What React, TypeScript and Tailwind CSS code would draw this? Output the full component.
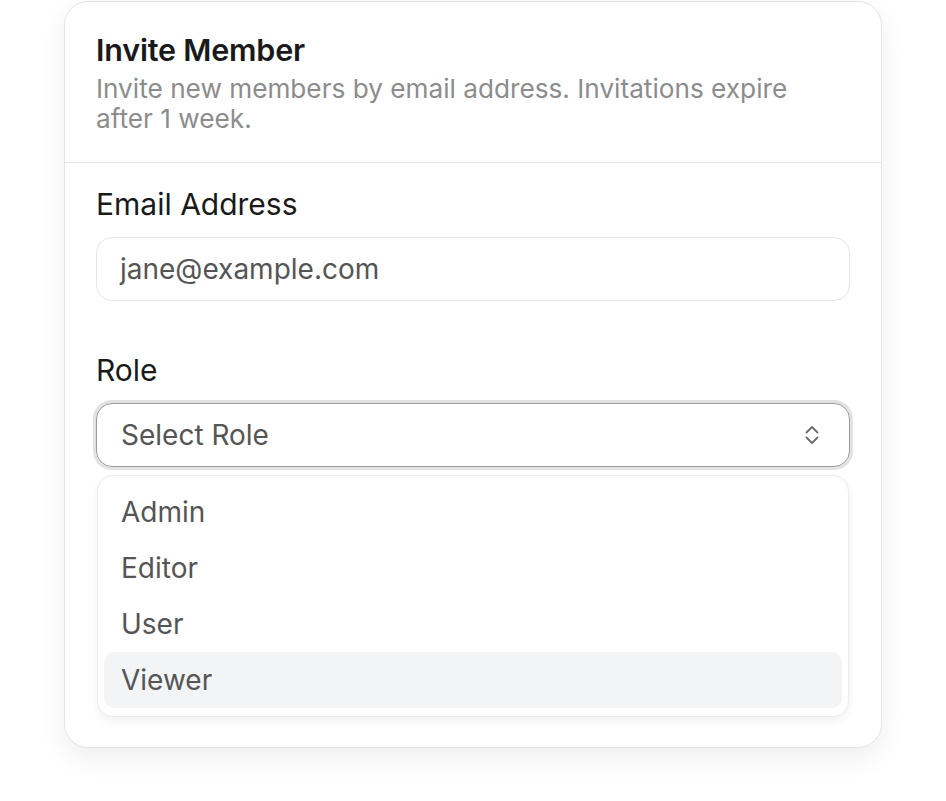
const roles = ['Admin', 'Editor', 'User', 'Viewer'];

function UpDownIcon() {
  return (
    <svg width="16" height="24" viewBox="0 0 16 24" fill="none" className="text-[#6b6b6b]">
      <path d="M2.5 9.5 8 4l5.5 5.5" stroke="currentColor" strokeWidth="1.8" strokeLinecap="round" strokeLinejoin="round" />
      <path d="M2.5 14.5 8 20l5.5-5.5" stroke="currentColor" strokeWidth="1.8" strokeLinecap="round" strokeLinejoin="round" />
    </svg>
  );
}

export default function App() {
  const active = 'Viewer';

  return (
    <div className="min-h-[801px] bg-white pl-[64px] pt-px font-['Inter',sans-serif]">
      <div className="w-[818px] rounded-[24px] border border-[#e4e4e4] bg-white shadow-[0_10px_28px_rgba(0,0,0,0.07)]">
        {/* Header */}
        <div className="border-b border-[#e6e6e6] px-[31px] pb-[28px] pt-[30px]">
          <h2 className="text-[30.5px] font-semibold leading-[36px] tracking-[-0.2px] text-[#1a1a1a]">
            Invite Member
          </h2>
          <p className="mt-[6px] text-[26.2px] leading-[30px] text-[#8c8c8c]">
            Invite new members by email address. Invitations expire after 1 week.
          </p>
        </div>

        {/* Body */}
        <div className="px-[31px] pb-[30px] pt-[23px]">
          <label className="block text-[30px] leading-[36px] text-[#1a1a1a]">Email Address</label>
          <div className="mt-[15px] flex h-[64px] items-center rounded-[16px] border border-[#e6e6e6] px-[23px]">
            <span className="text-[28px] text-[#555555]">jane@example.com</span>
          </div>

          <label className="mt-[51px] block text-[30px] leading-[36px] text-[#1a1a1a]">Role</label>
          <div className="mt-[15px] flex h-[64px] items-center justify-between rounded-[16px] border border-[#9a9a9a] pl-[24px] pr-[29px] ring-[3px] ring-[#e2e2e2]">
            <span className="text-[28px] text-[#555555]">Select Role</span>
            <UpDownIcon />
          </div>

          <ul className="mx-px mt-[8px] rounded-[16px] border border-[#ececec] bg-white px-[6px] py-[8px] shadow-[0_4px_10px_rgba(0,0,0,0.06)]">
            {roles.map((role) => (
              <li
                key={role}
                className={`flex h-[56px] items-center rounded-[10px] px-[17px] text-[28px] text-[#555555] ${
                  role === active ? 'bg-[#f3f4f6]' : ''
                }`}
              >
                {role}
              </li>
            ))}
          </ul>
        </div>
      </div>
    </div>
  );
}
